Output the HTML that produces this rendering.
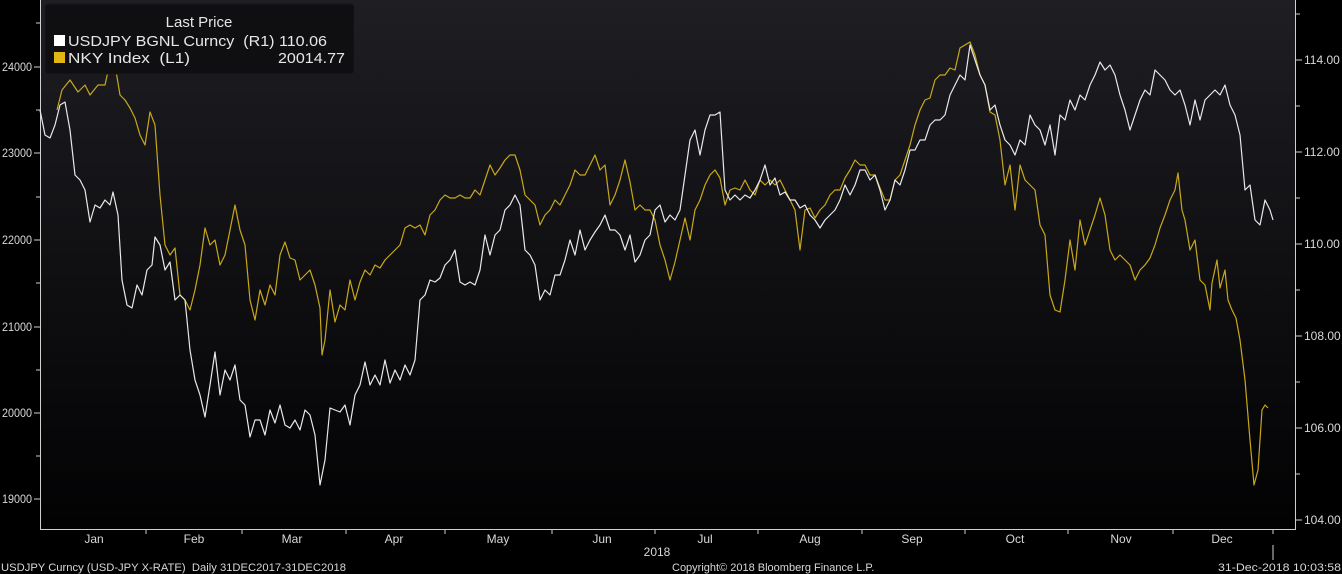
<!DOCTYPE html>
<html><head><meta charset="utf-8"><style>
html,body{margin:0;padding:0;background:#000;width:1342px;height:574px;overflow:hidden}
svg text{font-family:"Liberation Sans",sans-serif}
</style></head><body>
<svg width="1342" height="574" xmlns="http://www.w3.org/2000/svg">
<defs><linearGradient id="g" x1="0" y1="0" x2="0" y2="1"><stop offset="0" stop-color="#1e1e23"/><stop offset="1" stop-color="#020203"/></linearGradient></defs>
<rect width="1342" height="574" fill="#000"/>
<rect x="40" y="0" width="1255" height="529" fill="url(#g)"/>
<g stroke="#cfcfcf" stroke-width="1" fill="none">
<line x1="40.5" y1="0" x2="40.5" y2="529"/>
<line x1="1295.5" y1="0" x2="1295.5" y2="529"/>
<line x1="40" y1="529.5" x2="1296" y2="529.5"/>
</g>
<g stroke="#cfcfcf" stroke-width="1">
<line x1="36" y1="23" x2="40" y2="23"/><line x1="34" y1="67" x2="40" y2="67"/><line x1="36" y1="110" x2="40" y2="110"/><line x1="34" y1="153" x2="40" y2="153"/><line x1="36" y1="197" x2="40" y2="197"/><line x1="34" y1="240" x2="40" y2="240"/><line x1="36" y1="283" x2="40" y2="283"/><line x1="34" y1="327" x2="40" y2="327"/><line x1="36" y1="370" x2="40" y2="370"/><line x1="34" y1="413" x2="40" y2="413"/><line x1="36" y1="456" x2="40" y2="456"/><line x1="34" y1="499" x2="40" y2="499"/>
<line x1="1296" y1="14" x2="1300" y2="14"/><line x1="1296" y1="60" x2="1302" y2="60"/><line x1="1296" y1="106" x2="1300" y2="106"/><line x1="1296" y1="152" x2="1302" y2="152"/><line x1="1296" y1="198" x2="1300" y2="198"/><line x1="1296" y1="244" x2="1302" y2="244"/><line x1="1296" y1="290" x2="1300" y2="290"/><line x1="1296" y1="336" x2="1302" y2="336"/><line x1="1296" y1="382" x2="1300" y2="382"/><line x1="1296" y1="428" x2="1302" y2="428"/><line x1="1296" y1="474" x2="1300" y2="474"/><line x1="1296" y1="520" x2="1302" y2="520"/>
<line x1="146" y1="530" x2="146" y2="534"/><line x1="242" y1="530" x2="242" y2="534"/><line x1="346" y1="530" x2="346" y2="534"/><line x1="445" y1="530" x2="445" y2="534"/><line x1="552" y1="530" x2="552" y2="534"/><line x1="655" y1="530" x2="655" y2="534"/><line x1="758" y1="530" x2="758" y2="534"/><line x1="862" y1="530" x2="862" y2="534"/><line x1="965" y1="530" x2="965" y2="534"/><line x1="1068" y1="530" x2="1068" y2="534"/><line x1="1173" y1="530" x2="1173" y2="534"/><line x1="1273" y1="530" x2="1273" y2="534"/><line x1="1273" y1="545" x2="1273" y2="560"/>
</g>
<g fill="#d8d8d8" font-size="12">
<text x="2" y="71" textLength="30" lengthAdjust="spacingAndGlyphs">24000</text><text x="2" y="157" textLength="30" lengthAdjust="spacingAndGlyphs">23000</text><text x="2" y="244" textLength="30" lengthAdjust="spacingAndGlyphs">22000</text><text x="2" y="331" textLength="30" lengthAdjust="spacingAndGlyphs">21000</text><text x="2" y="417" textLength="30" lengthAdjust="spacingAndGlyphs">20000</text><text x="2" y="503" textLength="30" lengthAdjust="spacingAndGlyphs">19000</text>
<text x="1304" y="64">114.00</text><text x="1304" y="156">112.00</text><text x="1304" y="248">110.00</text><text x="1304" y="340">108.00</text><text x="1304" y="432">106.00</text><text x="1304" y="524">104.00</text>
<g text-anchor="middle"><text x="94" y="543">Jan</text><text x="194" y="543">Feb</text><text x="292" y="543">Mar</text><text x="394" y="543">Apr</text><text x="498" y="543">May</text><text x="602" y="543">Jun</text><text x="705" y="543">Jul</text><text x="810" y="543">Aug</text><text x="912" y="543">Sep</text><text x="1015" y="543">Oct</text><text x="1121" y="543">Nov</text><text x="1222" y="543">Dec</text><text x="657" y="556">2018</text></g>
</g>
<g fill="#d8d8d8" font-size="11">
<text x="1" y="571" textLength="345" lengthAdjust="spacingAndGlyphs" xml:space="preserve">USDJPY Curncy (USD-JPY X-RATE)  Daily 31DEC2017-31DEC2018</text>
<text x="672" y="571">Copyright© 2018 Bloomberg Finance L.P.</text>
<text x="1218" y="571" textLength="123" lengthAdjust="spacingAndGlyphs">31-Dec-2018 10:03:58</text>
</g>
<polyline fill="none" stroke="#c9a818" stroke-width="1.2" stroke-linejoin="round" points="57,110 62,90 70,80 78,92 85,85 90,95 98,85 105,85 110,62 115,65 120,95 125,100 130,108 135,118 140,135 145,145 150,112 155,125 160,195 165,245 170,255 175,248 180,295 185,300 190,310 195,290 200,265 205,228 210,245 215,240 220,265 225,255 230,230 235,205 240,230 245,245 250,300 255,320 260,290 265,305 270,285 275,295 280,255 285,242 290,258 295,260 300,280 305,275 310,270 315,285 320,308 322,355 325,340 330,290 335,322 340,305 345,310 350,280 355,300 360,282 365,270 370,275 375,265 380,268 385,260 390,255 395,250 400,245 405,228 410,225 415,228 420,225 425,235 430,215 435,210 440,200 445,195 450,198 455,198 460,195 465,198 470,198 475,190 480,195 485,180 490,165 495,175 500,168 505,160 510,155 515,155 520,170 525,195 530,200 535,205 540,225 545,215 550,210 555,200 560,205 565,195 570,185 575,170 580,175 585,175 590,165 595,155 600,170 605,165 610,205 615,195 620,180 625,160 630,182 635,210 640,205 645,210 650,210 655,220 660,245 665,260 670,280 675,262 680,240 685,218 690,240 695,210 700,200 705,185 710,175 715,170 720,178 725,205 730,190 735,188 740,190 745,180 750,190 755,195 760,180 765,185 770,180 775,185 780,180 785,190 790,200 795,210 800,250 805,210 810,208 815,218 820,210 825,205 830,195 835,190 840,190 845,178 850,170 855,160 860,165 865,165 870,175 875,175 880,188 885,200 890,200 895,180 900,175 905,160 910,145 915,125 920,110 925,100 930,98 935,80 940,75 945,75 950,68 955,70 960,48 965,45 970,42 975,55 980,75 985,85 990,112 995,115 1000,140 1005,185 1010,165 1015,210 1020,165 1025,180 1030,185 1035,190 1040,225 1045,235 1050,295 1055,310 1060,312 1065,280 1070,240 1075,270 1080,220 1085,245 1090,230 1095,215 1100,198 1105,215 1110,250 1115,260 1120,255 1125,260 1130,265 1135,280 1140,270 1145,265 1150,258 1155,245 1160,228 1165,215 1170,200 1175,190 1178,173 1182,210 1185,220 1190,250 1195,240 1200,280 1205,285 1210,310 1212,283 1217,260 1220,288 1225,270 1228,300 1232,310 1236,318 1240,340 1245,380 1250,440 1254,485 1258,470 1262,410 1265,405 1268,408"/>
<polyline fill="none" stroke="#e8e8e8" stroke-width="1.2" stroke-linejoin="round" points="40,110 45,135 50,138 55,125 60,105 65,102 70,130 75,175 80,180 85,190 90,222 95,205 100,208 105,200 110,205 113,192 118,215 122,280 127,305 132,308 137,285 142,295 147,270 152,265 155,237 160,245 165,270 170,262 175,300 180,295 185,300 190,350 195,380 200,395 205,417 210,385 215,352 220,395 225,370 230,380 235,365 240,400 245,405 250,437 255,420 260,420 265,435 270,410 275,423 280,405 285,425 290,428 295,420 300,430 305,410 310,415 315,435 320,485 325,460 330,408 335,410 340,412 345,405 350,425 355,395 360,385 365,362 370,385 375,375 380,385 385,360 390,383 395,370 400,380 405,365 410,375 415,360 420,300 425,295 430,280 435,282 440,278 445,265 450,260 455,250 460,282 465,285 470,282 475,285 480,270 485,235 490,255 495,235 500,230 505,210 510,205 515,195 520,205 525,250 530,255 535,265 540,300 545,290 550,295 555,275 560,275 565,260 570,240 575,255 580,230 585,250 590,240 595,232 600,225 605,215 610,230 615,230 620,235 625,250 630,235 635,262 640,255 645,240 650,235 655,210 660,205 665,222 670,215 675,220 680,210 685,175 690,140 695,130 700,155 705,130 710,115 715,115 720,112 725,190 730,200 735,195 740,200 745,195 750,198 755,190 760,180 765,165 770,185 775,178 780,195 785,192 790,200 795,200 800,208 805,205 810,215 815,220 820,228 825,220 830,215 835,210 840,200 845,185 850,195 855,185 860,170 865,170 870,180 875,175 880,190 885,210 890,200 895,180 900,185 905,170 910,150 915,150 920,140 925,140 930,125 935,120 940,120 945,115 950,95 955,85 960,75 965,80 970,45 975,60 980,75 985,85 990,110 995,105 1000,125 1005,140 1010,145 1015,155 1020,140 1025,145 1030,115 1035,125 1040,130 1045,145 1050,125 1055,155 1060,115 1065,120 1070,100 1075,110 1080,95 1085,100 1090,85 1095,75 1100,62 1105,70 1110,65 1115,75 1120,95 1125,110 1130,130 1135,115 1140,100 1145,90 1150,95 1155,70 1160,75 1165,80 1170,90 1175,95 1180,90 1185,105 1190,125 1195,100 1200,120 1205,100 1210,95 1215,90 1220,95 1225,85 1230,105 1235,115 1240,135 1245,190 1250,185 1255,220 1260,225 1265,200 1270,210 1273,220"/>
<rect x="45" y="4" width="309" height="70" rx="3" fill="#0f0f12" stroke="#1a1a1e"/>
<g fill="#e6e6e6" font-size="15">
<text x="199" y="27" text-anchor="middle">Last Price</text>
<rect x="54" y="35" width="11" height="11" fill="#fff"/>
<text x="68" y="46" textLength="259" lengthAdjust="spacingAndGlyphs" xml:space="preserve">USDJPY BGNL Curncy  (R1) 110.06</text>
<rect x="54" y="52" width="11" height="11" fill="#e2b614"/>
<text x="68" y="63" textLength="122" lengthAdjust="spacingAndGlyphs" xml:space="preserve">NKY Index  (L1)</text>
<text x="278" y="63" textLength="67" lengthAdjust="spacingAndGlyphs">20014.77</text>
</g>
</svg>
</body></html>
